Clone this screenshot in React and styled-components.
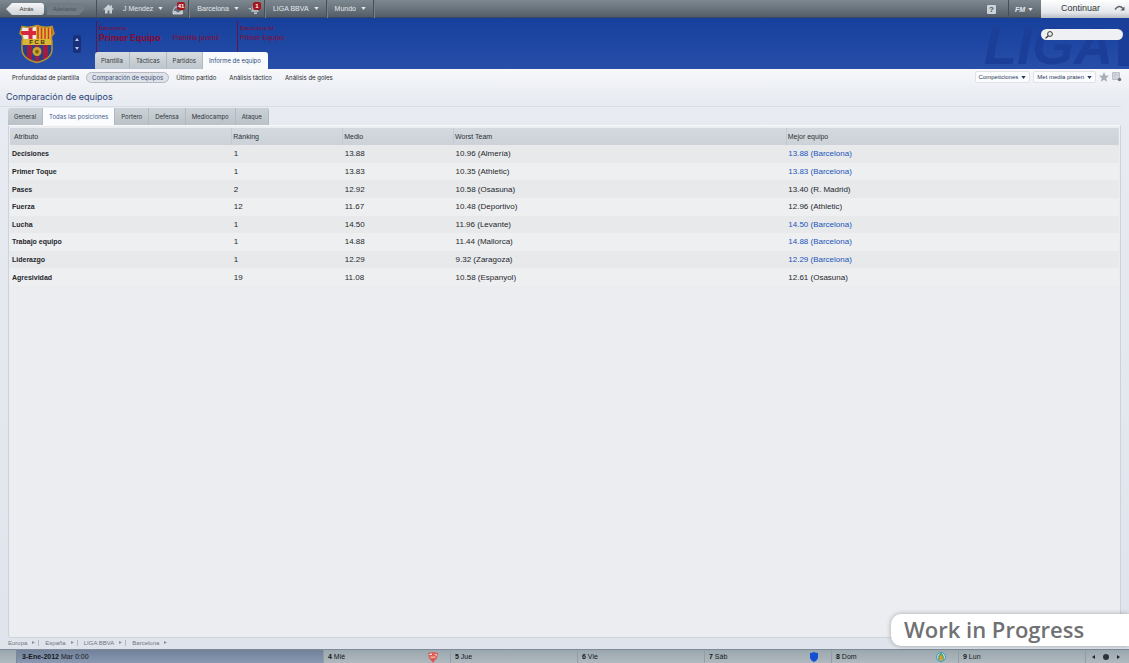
import React, { useState } from 'react';
import styled, { createGlobalStyle } from 'styled-components';

const navLinks = [
  'Profundidad de plantilla',
  'Comparación de equipos',
  'Último partido',
  'Análisis táctico',
  'Análisis de goles',
];

const teamTabs = ['Plantilla', 'Tácticas', 'Partidos', 'Informe de equipo'];

const positionTabs = [
  'General',
  'Todas las posiciones',
  'Portero',
  'Defensa',
  'Mediocampo',
  'Ataque',
];

const rows = [
  ['Decisiones', '1', '13.88', '10.96 (Almería)', '13.88 (Barcelona)'],
  ['Primer Toque', '1', '13.83', '10.35 (Athletic)', '13.83 (Barcelona)'],
  ['Pases', '2', '12.92', '10.58 (Osasuna)', '13.40 (R. Madrid)'],
  ['Fuerza', '12', '11.67', '10.48 (Deportivo)', '12.96 (Athletic)'],
  ['Lucha', '1', '14.50', '11.96 (Levante)', '14.50 (Barcelona)'],
  ['Trabajo equipo', '1', '14.88', '11.44 (Mallorca)', '14.88 (Barcelona)'],
  ['Liderazgo', '1', '12.29', '9.32 (Zaragoza)', '12.29 (Barcelona)'],
  ['Agresividad', '19', '11.08', '10.58 (Espanyol)', '12.61 (Osasuna)'],
];

const days = [
  { num: '4', name: 'Mié', badge: 'sevilla' },
  { num: '5', name: 'Jue' },
  { num: '6', name: 'Vie' },
  { num: '7', name: 'Sáb', badge: 'shield' },
  { num: '8', name: 'Dom', badge: 'round' },
  { num: '9', name: 'Lun' },
];

const Caret = () => (
  <svg width='5' height='3' viewBox='0 0 5 3'>
    <path d='M0.300 0h4.400L2.500 3z' fill='currentColor' />
  </svg>
);

const HomeIcon = () => (
  <svg width='11' height='10' viewBox='0 0 11 10'>
    <path
      d='M5.5 0.5L0.3 5.2l.7.7 1-.8V9.6h2.6V6.4h1.8v3.2H9V5.1l1 .8.7-.7L9 3.6V1.2H7.8v1.3z'
      fill='#c9d0d6'
    />
  </svg>
);

const InboxIcon = () => (
  <svg width='14' height='12' viewBox='0 0 14 12'>
    <path d='M3 4h6l1 4v3H1V8z' fill='none' stroke='#c3cad0' />
    <path d='M1 8h3l1 1.3h2L8 8h3v3H1z' fill='#c3cad0' />
  </svg>
);

const BellIcon = () => (
  <svg width='14' height='12' viewBox='0 0 14 12'>
    <path
      d='M6.5 2.5c-2 0-2.5 1.5-2.5 3.5L3 9h8L9.500 6c0-2-1-3.500-3-3.500z'
      fill='#aeb7be'
    />
    <path d='M0 5.500l3 1.500v-2z' fill='#c3cad0' />
    <path d='M6 9.500h3v1.500H6z' fill='#c3cad0' />
  </svg>
);

const Crest = () => (
  <svg width='38' height='40' viewBox='0 0 38 40'>
    <defs>
      <clipPath id='crest'>
        <path d='M4 2.500Q11 4.500 19 1.500 27 4.500 34 2.500L36 9.500Q32 12 34 17L34 25Q34 35 19 38.500 4 35 4 25V17Q6 12 2 9.500z' />
      </clipPath>
    </defs>
    <g clipPath='url(#crest)'>
      <rect width='38' height='40' fill='#d2ad2b' />
      <rect y='2' width='18' height='14' fill='#f1e9e4' />
      <path d='M10.500 2h4v14h-4zM3 7h15v4H3z' fill='#d6293b' />
      <path d='M18 2h20v14H18z' fill='#e0b62e' />
      <path d='M20 2v14M23.500 2v14M27 2v14M30.500 2v14M34 2v14' stroke='#c93a30' strokeWidth='1.500' />
      <path d='M0 15h38v6H0z' fill='#d9b633' />
      <path d='M0 21h38v19H0z' fill='#22418f' />
      <path d='M9 21h5v19H9zM17 21h4v19h-4zM25 21h5v19h-5z' fill='#a01c40' />
      <circle cx='19' cy='27.500' r='4.500' fill='#cfa62b' />
      <path d='M19 25.500l2 1.500-.8 2.400h-2.400L17 27z' fill='#806018' />
    </g>
    <path
      d='M4 2.500Q11 4.500 19 1.500 27 4.500 34 2.500L36 9.500Q32 12 34 17L34 25Q34 35 19 38.500 4 35 4 25V17Q6 12 2 9.500z'
      fill='none'
      stroke='#b8932a'
      strokeWidth='1.500'
    />
    <text x='19' y='20' textAnchor='middle' fontSize='6' fontWeight='bold' fill='#3b3015'>
      F C B
    </text>
  </svg>
);

const ClubBadge = ({ kind }) => {
  if (kind === 'sevilla') {
    return (
      <svg width='10' height='11' viewBox='0 0 10 11'>
        <path d='M0 1l5-1 5 1-1 5-4 5-4-5z' fill='#dc5a5a' />
        <path d='M1 2l3-.5V3H1.500zM6 2l3 .5L8.500 4z' fill='#f4ecd9' />
        <path d='M2 4.500h6L7 6H3z' fill='#f0b68f' />
      </svg>
    );
  }
  if (kind === 'shield') {
    return (
      <svg width='10' height='10' viewBox='0 0 10 10'>
        <path d='M1 1q2 0 4-1 2 1 4 1v4q0 3-4 5-4-2-4-5z' fill='#1450cf' />
      </svg>
    );
  }
  return (
    <svg width='10' height='10' viewBox='0 0 10 10'>
      <circle cx='5' cy='5' r='4.500' fill='#c5dbe0' stroke='#3f93c4' />
      <path d='M5 0.500q4 3.500 2.500 8h-5q-1.500-4.500 2.500-8z' fill='#4aa85c' />
      <path d='M5 2.500q2.500 3 1.200 6H3.800q-1.300-3 1.200-6z' fill='#e49a35' />
    </svg>
  );
};

function App() {
  const [teamTab, setTeamTab] = useState('Informe de equipo');
  const [position, setPosition] = useState('Todas las posiciones');

  return (
    <>
      <GlobalStyle />
      <Page>
        <TopBar>
          <History>
            <BackButton type='button'>Atrás</BackButton>
            <ForwardButton type='button' disabled>
              Adelante
            </ForwardButton>
          </History>
          <MenuGroup>
            <MenuButton type='button' aria-label='Inicio'>
              <HomeIcon />
            </MenuButton>
            <MenuButton type='button'>
              J Mendez <Caret />
            </MenuButton>
            <AlertButton type='button' aria-label='Mensajes'>
              <InboxIcon />
              <Count>41</Count>
            </AlertButton>
          </MenuGroup>
          <MenuGroup>
            <MenuButton type='button'>
              Barcelona <Caret />
            </MenuButton>
            <AlertButton type='button' aria-label='Avisos'>
              <BellIcon />
              <Count>1</Count>
            </AlertButton>
          </MenuGroup>
          <MenuGroup>
            <MenuButton type='button'>
              LIGA BBVA <Caret />
            </MenuButton>
          </MenuGroup>
          <MenuGroup>
            <MenuButton type='button'>
              Mundo <Caret />
            </MenuButton>
          </MenuGroup>
          <Spacer />
          <HelpButton type='button'>?</HelpButton>
          <FmButton type='button'>
            FM <Caret />
          </FmButton>
          <ContinueButton type='button'>
            Continuar
            <svg width='11' height='6' viewBox='0 0 11 6'>
              <path d='M1 4.500Q5 -1 9 3.500' fill='none' stroke='#596066' strokeWidth='1.300' />
              <path d='M10.500 1.500v4h-4z' fill='#596066' />
            </svg>
          </ContinueButton>
        </TopBar>

        <Header>
          <Watermark aria-hidden='true'>LIGA</Watermark>
          <CrestBox>
            <Crest />
            <Stepper type='button' aria-label='Cambiar de equipo'>
              <svg width='8' height='18' viewBox='0 0 8 18'>
                <rect width='8' height='18' rx='3' fill='#18307a' />
                <path d='M2 6l2-3 2 3zM2 12h4l-2 3z' fill='#b9c6e8' />
              </svg>
            </Stepper>
          </CrestBox>
          <TeamArea>
            <Teams>
              <Team $wide>
                <Club>Barcelona</Club>
                <Squads>
                  <FirstTeam>Primer Equipo</FirstTeam>
                  <SquadLink href='#juvenil'>Plantilla juvenil</SquadLink>
                </Squads>
              </Team>
              <Team>
                <Club>Barcelona At</Club>
                <Squads>
                  <SquadLink href='#filial'>Primer Equipo</SquadLink>
                </Squads>
              </Team>
            </Teams>
            <TeamTabs>
              {teamTabs.map((tab) => (
                <TeamTab
                  key={tab}
                  type='button'
                  $active={tab === teamTab}
                  onClick={() => setTeamTab(tab)}
                >
                  {tab}
                </TeamTab>
              ))}
            </TeamTabs>
          </TeamArea>
          <SearchBox>
            <svg width='8' height='8' viewBox='0 0 8 8'>
              <circle cx='5' cy='3' r='2.400' fill='none' stroke='#333' />
              <path d='M3.300 4.800L.6 7.400' stroke='#333' strokeWidth='1.300' />
            </svg>
            <SearchInput type='text' aria-label='Buscar' />
          </SearchBox>
        </Header>

        <SubNav>
          {navLinks.map((link) => (
            <NavLink key={link} href='#seccion' $active={link === 'Comparación de equipos'}>
              {link}
            </NavLink>
          ))}
          <Spacer />
          <Tools>
            <DropButton type='button'>
              Competiciones <Caret />
            </DropButton>
            <DropButton type='button'>
              Met media praten <Caret />
            </DropButton>
            <ToolButton type='button' aria-label='Favorito'>
              <svg width='10' height='10' viewBox='0 0 10 10'>
                <path d='M5 0l1.400 3.400 3.600.3-2.700 2.400.8 3.600L5 7.800 1.900 9.700l.8-3.600L0 3.700l3.600-.3z' fill='#a9aeb5' />
              </svg>
            </ToolButton>
            <ToolButton type='button' aria-label='Añadir nota'>
              <svg width='10' height='10' viewBox='0 0 10 10'>
                <path d='M.5.500h7v7h-7z' fill='#d3d7dd' stroke='#bcc1c9' />
                <path d='M3 1v6M1 3h6' stroke='#c3c8cf' />
                <circle cx='7.500' cy='7.500' r='1.800' fill='#74797f' />
              </svg>
            </ToolButton>
          </Tools>
        </SubNav>

        <Title>Comparación de equipos</Title>

        <Main>
          <PositionTabs>
            {positionTabs.map((tab) => (
              <PositionTab
                key={tab}
                type='button'
                $active={tab === position}
                onClick={() => setPosition(tab)}
              >
                {tab}
              </PositionTab>
            ))}
          </PositionTabs>
          <Panel>
            <Table>
              <thead>
                <HeadRow>
                  <HeadCell $width='20%'>Atributo</HeadCell>
                  <HeadCell $width='10%'>Ránking</HeadCell>
                  <HeadCell $width='10%'>Medio</HeadCell>
                  <HeadCell $width='30%'>Worst Team</HeadCell>
                  <HeadCell $width='30%'>Mejor equipo</HeadCell>
                </HeadRow>
              </thead>
              <tbody>
                {rows.map(([name, rank, average, worst, best]) => (
                  <Row key={name}>
                    <NameCell>{name}</NameCell>
                    <Cell>{rank}</Cell>
                    <Cell>{average}</Cell>
                    <Cell>{worst}</Cell>
                    <Cell $own={best.includes('Barcelona')}>{best}</Cell>
                  </Row>
                ))}
              </tbody>
            </Table>
          </Panel>
        </Main>

        <Crumbs>
          {['Europa', 'España', 'LIGA BBVA', 'Barcelona'].map((crumb) => (
            <Crumb key={crumb} href='#region'>
              {crumb}
              <svg width='3' height='3' viewBox='0 0 3 3'>
                <path d='M0 0l3 1.500L0 3z' fill='#8b919b' />
              </svg>
            </Crumb>
          ))}
        </Crumbs>

        <Calendar>
          <CalendarEdge />
          <Today>
            <b>3-Ene-2012</b> Mar 0:00
          </Today>
          {days.map((day) => (
            <Day key={day.num}>
              <span>
                <b>{day.num}</b> {day.name}
              </span>
              {day.badge && <ClubBadge kind={day.badge} />}
            </Day>
          ))}
          <CalendarControls>
            <ToolButton type='button' aria-label='Anterior'>
              <svg width='3' height='4' viewBox='0 0 3 4'>
                <path d='M3 0v4L0 2z' fill='#20262b' />
              </svg>
            </ToolButton>
            <ToolButton type='button' aria-label='Hoy'>
              <svg width='6' height='6' viewBox='0 0 6 6'>
                <circle cx='3' cy='3' r='3' fill='#2c3338' />
              </svg>
            </ToolButton>
            <ToolButton type='button' aria-label='Siguiente'>
              <svg width='3' height='4' viewBox='0 0 3 4'>
                <path d='M0 0v4l3-2z' fill='#20262b' />
              </svg>
            </ToolButton>
          </CalendarControls>
        </Calendar>

        <Ribbon>Work in Progress</Ribbon>
      </Page>
    </>
  );
}

export default App;

const GlobalStyle = createGlobalStyle`
  * {
    box-sizing: border-box;
  }
  body {
    margin: 0;
    font-family: 'Liberation Sans', Arial, sans-serif;
    font-size: 7px;
    color: #25282c;
  }
  button, input {
    font: inherit;
    color: inherit;
    border: none;
    background: transparent;
    padding: 0;
    margin: 0;
  }
  a {
    color: inherit;
    text-decoration: none;
  }
  svg {
    display: block;
    flex: none;
  }
`;

const Page = styled.div`
  position: relative;
  min-height: 100vh;
  display: flex;
  flex-direction: column;
  background: linear-gradient(#f6f8fb 69px, #e8ebf1 100px, #dfe4ec);
`;

const Spacer = styled.div`
  flex: 1;
`;

const TopBar = styled.div`
  height: 18px;
  display: flex;
  align-items: stretch;
  color: #e6eaed;
  background: linear-gradient(#7e8890, #68727b 50%, #535d67 94%, #26355c);
`;

const History = styled.div`
  width: 97px;
  display: flex;
  align-items: center;
  gap: 3px;
  padding-left: 6px;
  border-right: 1px solid #454f58;
`;

const BackButton = styled.button`
  width: 38px;
  height: 12px;
  padding-left: 3px;
  font-size: 6px;
  color: #333;
  border-radius: 0 3px 3px 0;
  background: linear-gradient(#f5f6f7, #cdd2d6);
  clip-path: polygon(0 50%, 6px 0, 100% 0, 100% 100%, 6px 100%);
`;

const ForwardButton = styled(BackButton)`
  padding: 0 3px 0 0;
  color: #4a535b;
  background: #727c84;
  clip-path: polygon(0 0, 32px 0, 100% 50%, 32px 100%, 0 100%);
`;

const MenuGroup = styled.div`
  display: flex;
  align-items: center;
  gap: 9px;
  padding: 0 7px 1px 8px;
  border-right: 1px solid #454f58;
  box-shadow: 1px 0 0 #76818a;
  &:nth-child(2) {
    padding: 0 2px 1px 6px;
  }
  &:nth-child(3) {
    padding-right: 2px;
  }
`;

const MenuButton = styled.button`
  display: flex;
  align-items: center;
  gap: 5px;
`;

const AlertButton = styled.button`
  position: relative;
`;

const Count = styled.span`
  position: absolute;
  top: -1px;
  right: 1px;
  min-width: 8px;
  padding: 0 1px;
  font-size: 6px;
  line-height: 8px;
  font-weight: bold;
  text-align: center;
  color: #fff;
  border-radius: 2px;
  background: #a3161e;
`;

const HelpButton = styled.button`
  align-self: center;
  width: 9px;
  height: 9px;
  margin-right: 12px;
  font-size: 8px;
  line-height: 9px;
  font-weight: bold;
  color: #47515a;
  border-radius: 1px;
  background: #cdd4d9;
`;

const FmButton = styled(MenuButton)`
  width: 33px;
  gap: 3px;
  padding-left: 6px;
  font-weight: bold;
  font-style: italic;
  border-left: 1px solid #454f58;
`;

const ContinueButton = styled.button`
  width: 88px;
  display: flex;
  align-items: center;
  justify-content: flex-end;
  gap: 14px;
  padding: 0 4px 2px 0;
  font-size: 9px;
  color: #31363c;
  background: linear-gradient(#fff, #e3e6ea 70%, #b9bec5);
`;

const Header = styled.header`
  position: relative;
  height: 51px;
  display: flex;
  background: linear-gradient(#173f9c, #1e46a3 50%, #284fa8);
  &::after {
    content: '';
    position: absolute;
    top: 0;
    right: 0;
    width: 11px;
    height: 48px;
    background: #1b3f99;
  }
`;

const Watermark = styled.span`
  position: absolute;
  right: 16px;
  top: 2px;
  font-size: 54px;
  line-height: 51px;
  font-weight: bold;
  font-style: italic;
  color: #1b3f99;
`;

const CrestBox = styled.div`
  width: 95px;
  display: flex;
  align-items: center;
  gap: 17px;
  padding-left: 18px;
`;

const Stepper = styled.button`
  display: block;
`;

const TeamArea = styled.div`
  flex: 1;
  display: flex;
  flex-direction: column;
  justify-content: space-between;
  padding-top: 3px;
`;

const Teams = styled.div`
  display: flex;
  padding-left: 1px;
  color: #850b34;
`;

const Team = styled.div`
  width: ${(props) => (props.$wide ? '141px' : 'auto')};
  height: 31px;
  padding: 4px 0 0 2px;
  border-left: 1px solid #641548;
`;

const Club = styled.div`
  font-size: 6px;
  line-height: 7px;
`;

const Squads = styled.div`
  display: flex;
  align-items: center;
  gap: 12px;
  line-height: 11px;
`;

const FirstTeam = styled.strong`
  font-family: Inter, sans-serif;
  font-size: 9px;
`;

const SquadLink = styled.a`
  font-size: 7px;
`;

const TeamTabs = styled.div`
  display: flex;
`;

const TeamTab = styled.button`
  height: 17px;
  padding: 0 6px;
  font-family: Inter, sans-serif;
  font-size: 6px;
  color: ${(props) => (props.$active ? '#2f4a80' : '#33383d')};
  background: ${(props) =>
    props.$active ? '#f8fafc' : 'linear-gradient(#d6dce0, #bcc5cb)'};
  border-right: 1px solid ${(props) => (props.$active ? '#f8fafc' : '#b0b9c0')};
  &:first-child {
    border-radius: 3px 0 0 0;
  }
  &:last-child {
    border-radius: 0 3px 0 0;
  }
`;

const SearchBox = styled.label`
  position: relative;
  z-index: 1;
  width: 82px;
  height: 11px;
  display: flex;
  align-items: center;
  margin: 11px 6px 0 0;
  padding: 0 4px;
  border-radius: 6px;
  background: #eef0f3;
`;

const SearchInput = styled.input`
  flex: 1;
  min-width: 0;
  outline: none;
`;

const SubNav = styled.nav`
  height: 16px;
  display: flex;
  align-items: center;
  gap: 1px;
  padding: 0 7px 0 6px;
`;

const NavLink = styled.a`
  height: 11px;
  padding: 0 5px;
  font-family: Inter, sans-serif;
  font-size: 6px;
  line-height: 9px;
  border: 1px solid ${(props) => (props.$active ? '#b4bac3' : 'transparent')};
  border-radius: 6px;
  color: ${(props) => (props.$active ? '#3a5078' : '#25282c')};
  background: ${(props) => (props.$active ? '#dfe3e8' : 'transparent')};
`;

const Tools = styled.div`
  display: flex;
  align-items: center;
  gap: 3px;
`;

const DropButton = styled.button`
  height: 12px;
  display: flex;
  align-items: center;
  gap: 3px;
  padding: 0 3px;
  font-size: 6px;
  color: #2b3a58;
  border: 1px solid #dfe3e9;
  border-radius: 2px;
  background: #fafbfd;
`;

const ToolButton = styled.button`
  display: block;
`;

const Title = styled.h1`
  height: 22px;
  margin: 0 8px 1px 0;
  padding-left: 6px;
  font-family: Inter, sans-serif;
  font-size: 9px;
  line-height: 24px;
  font-weight: normal;
  color: #2a4478;
  border-bottom: 1px solid #d9dee6;
`;

const Main = styled.main`
  flex: 1;
  display: flex;
  flex-direction: column;
  padding: 0 8px;
`;

const PositionTabs = styled.div`
  display: flex;
`;

const PositionTab = styled.button`
  height: 17px;
  padding: 0 6px;
  font-family: Inter, sans-serif;
  font-size: 6px;
  color: ${(props) => (props.$active ? '#3b5b94' : '#2e3337')};
  background: ${(props) =>
    props.$active ? '#fbfcfd' : 'linear-gradient(#cbd2d7, #bac2c8)'};
  border-right: 1px solid #b1bac0;
  &:first-child {
    border-radius: 3px 0 0 0;
  }
  &:last-child {
    border-radius: 0 3px 0 0;
  }
`;

const Panel = styled.section`
  flex: 1;
  padding: 2px 1px 0;
  border: 1px solid #cdd3dc;
  border-top-color: #f6f8fa;
  border-radius: 0 0 3px 3px;
  background: #ebedf0;
`;

const Table = styled.table`
  width: 100%;
  height: 158px;
  table-layout: fixed;
  border-collapse: collapse;
`;

const HeadRow = styled.tr`
  height: 17px;
  background: linear-gradient(#d3d9de, #cdd2d9);
`;

const HeadCell = styled.th`
  width: ${(props) => props.$width};
  padding: 0 0 0 1px;
  font-size: 7px;
  line-height: 8px;
  font-weight: normal;
  text-align: left;
  color: #2c3034;
  & + & {
    border-left: 1px solid #c3cad1;
  }
  &:first-child {
    padding-left: 4px;
  }
`;

const Row = styled.tr`
  background: #eeeff1;
  &:nth-child(odd) {
    background: #e7e9eb;
  }
`;

const Cell = styled.td`
  padding: 0 0 0 2px;
  font-size: 8px;
  line-height: 9px;
  color: ${(props) => (props.$own ? '#1c55b8' : '#25282c')};
`;

const NameCell = styled(Cell)`
  font-size: 7px;
  font-weight: bold;
`;

const Crumbs = styled.nav`
  height: 11px;
  display: flex;
  align-items: center;
  padding: 0 0 2px 8px;
`;

const Crumb = styled.a`
  display: flex;
  align-items: center;
  gap: 5px;
  margin-right: 6px;
  padding-right: 3px;
  font-size: 6px;
  line-height: 6px;
  color: #70767f;
  border-right: 1px solid #b3b9c2;
  &:last-child {
    border: none;
  }
`;

const Calendar = styled.footer`
  height: 14px;
  display: grid;
  grid-template-columns: 17px 306fr repeat(6, 127fr) 44px;
  font-size: 7px;
  line-height: 14px;
  color: #15191c;
  border-top: 1px solid #7f8b98;
  background: linear-gradient(#9ba7ae, #afb9bf);
`;

const CalendarEdge = styled.div`
  border-right: 1px solid #7c8993;
`;

const Today = styled.div`
  padding-left: 5px;
  background: linear-gradient(#71819a, #8c9bb3);
`;

const Day = styled.div`
  display: flex;
  align-items: center;
  justify-content: space-between;
  padding: 0 12px 0 4px;
  border-left: 1px solid #929ea6;
`;

const CalendarControls = styled.div`
  display: flex;
  align-items: center;
  justify-content: center;
  gap: 8px;
  padding-right: 4px;
  border-left: 1px solid #929ea6;
`;

const Ribbon = styled.div`
  position: absolute;
  right: 0;
  bottom: 17px;
  width: 238px;
  height: 32px;
  padding-left: 13px;
  font-family: 'Open Sans', sans-serif;
  font-size: 22px;
  line-height: 31px;
  font-weight: 600;
  color: #707173;
  border-radius: 10px 0 0 10px;
  background: #fff;
  box-shadow: 0 0 5px rgba(0, 0, 0, 0.3);
`;
